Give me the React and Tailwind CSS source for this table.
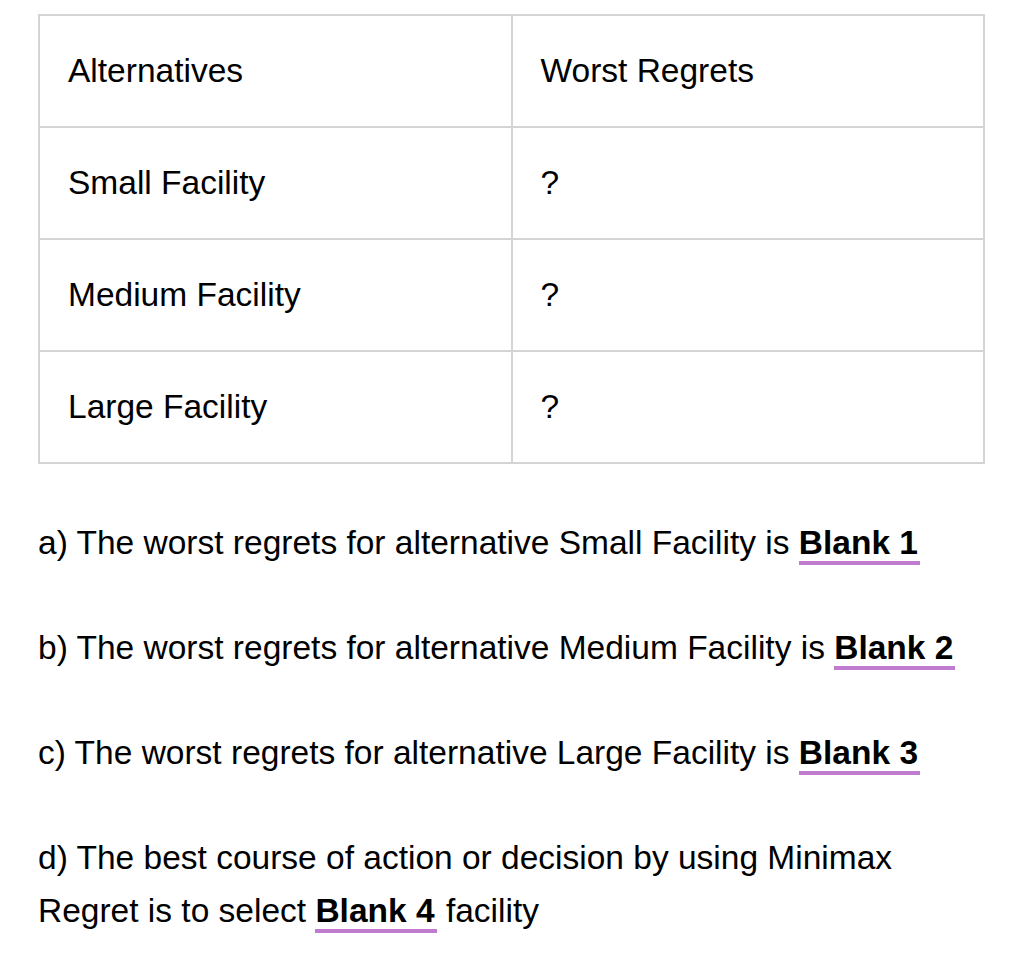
import React from "react";

const rows = [
  ["Alternatives", "Worst Regrets"],
  ["Small Facility", "?"],
  ["Medium Facility", "?"],
  ["Large Facility", "?"],
];

function Blank({ children }) {
  return (
    <span className="font-bold border-b-4 border-[#c07dcf] pr-[2px]">{children}</span>
  );
}

export default function App() {
  return (
    <div
      className="bg-white w-[1024px] h-[954px] text-black text-[33.5px] overflow-hidden"
      style={{ fontFamily: '"Liberation Sans", Arial, sans-serif' }}
    >
      <div className="pt-[14px] pl-[38px]">
        <table className="border-collapse w-[947px] table-fixed">
          <tbody>
            {rows.map((r, i) => (
              <tr key={i}>
                <td className="border-2 border-[#d4d4d4] h-[112px] pl-[28px] align-middle leading-none">
                  {r[0]}
                </td>
                <td className="border-2 border-[#d4d4d4] h-[112px] pl-[28px] align-middle leading-none">
                  {r[1]}
                </td>
              </tr>
            ))}
          </tbody>
        </table>
        <div className="leading-[53px]">
          <p className="mt-[52px]">
            a) The worst regrets for alternative Small Facility is <Blank>Blank 1</Blank>
          </p>
          <p className="mt-[52px]">
            b) The worst regrets for alternative Medium Facility is <Blank>Blank 2</Blank>
          </p>
          <p className="mt-[52px]">
            c) The worst regrets for alternative Large Facility is <Blank>Blank 3</Blank>
          </p>
          <p className="mt-[52px] w-[940px]">
            d) The best course of action or decision by using Minimax
            <br />
            Regret is to select <Blank>Blank 4</Blank> facility
          </p>
        </div>
      </div>
    </div>
  );
}
